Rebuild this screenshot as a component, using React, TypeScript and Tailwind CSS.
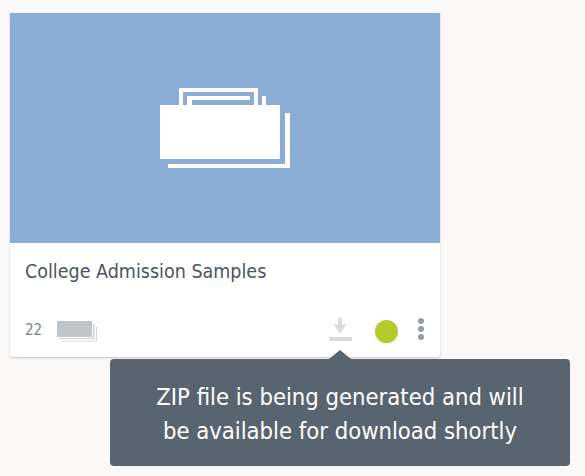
function AlbumIcon() {
  return (
    <svg width="150" height="100" viewBox="150 80 150 100" fill="#ffffff">
      {/* back sheets */}
      <path d="M179 105V88H258V105H254V92H183V105Z" />
      <path d="M187 105V96H250V100H192V105Z" />
      <rect x="262" y="96" width="4" height="9" />
      {/* front sheet */}
      <rect x="160" y="105" width="120" height="54" />
      {/* shadow sheet */}
      <path d="M285 113H290V168H168V164H285Z" />
    </svg>
  );
}

function StackIcon() {
  return (
    <svg width="41" height="22" viewBox="0 0 41 22">
      <rect x="0" y="0" width="35" height="16" fill="#bfc4c8" />
      <path d="M36 3H37.5V18H2V17H36Z" fill="#cdd1d4" />
      <path d="M39 6H40V20.5H5V19.5H39Z" fill="#d6d9db" />
    </svg>
  );
}

function DownloadIcon() {
  return (
    <svg width="23" height="24" viewBox="0 0 23 24" fill="#d9dde0">
      <path d="M9 0H13V6.5H17.5L11 16L4.5 6.5H9Z" />
      <rect x="0" y="19" width="23" height="4" />
    </svg>
  );
}

export default function App() {
  return (
    <div className="relative h-[476px] w-[585px] overflow-hidden bg-[#fbf9f7] pl-[10px] pt-[13px] font-['DejaVu_Sans',sans-serif] font-stretch-condensed">
      <div className="w-[430px] overflow-hidden rounded-b-[3px] bg-white shadow-[0_1px_2px_rgba(0,0,0,0.22)]">
        <div className="flex h-[230px] items-center justify-center bg-[#89add5] pt-[4px]">
          <AlbumIcon />
        </div>
        <div className="h-[114px] px-[15px] pt-[17px]">
          <h3 className="text-[19.5px] leading-[24px] text-[#4c5561]">College Admission Samples</h3>
          <div className="mt-[33px] flex items-center">
            <span className="w-[32px] text-[15px] text-[#7b838c]">22</span>
            <div className="mt-[4px]">
              <StackIcon />
            </div>
            <div className="ml-auto flex items-center">
              <DownloadIcon />
              <div className="ml-[23px] mt-[3px] h-[23px] w-[23px] rounded-full bg-[#b4cb2b]" />
              <div className="mb-[2px] ml-[20px] mr-[1px] flex flex-col gap-[2px]">
                <span className="h-[6px] w-[6px] rounded-full bg-[#969ca3]" />
                <span className="h-[6px] w-[6px] rounded-full bg-[#969ca3]" />
                <span className="h-[6px] w-[6px] rounded-full bg-[#969ca3]" />
              </div>
            </div>
          </div>
        </div>
      </div>
      <div className="absolute left-[110px] top-[359px] flex h-[107px] w-[460px] items-center justify-center rounded-[4px] bg-[#586470] pt-[2px] text-center text-[23.6px] leading-[34px] text-white">
        <div>
          ZIP file is being generated and will
          <br />
          be available for download shortly
        </div>
        <div className="absolute left-[219px] top-[-9px] h-0 w-0 border-x-[11px] border-b-[9px] border-x-transparent border-b-[#586470]" />
      </div>
    </div>
  );
}
